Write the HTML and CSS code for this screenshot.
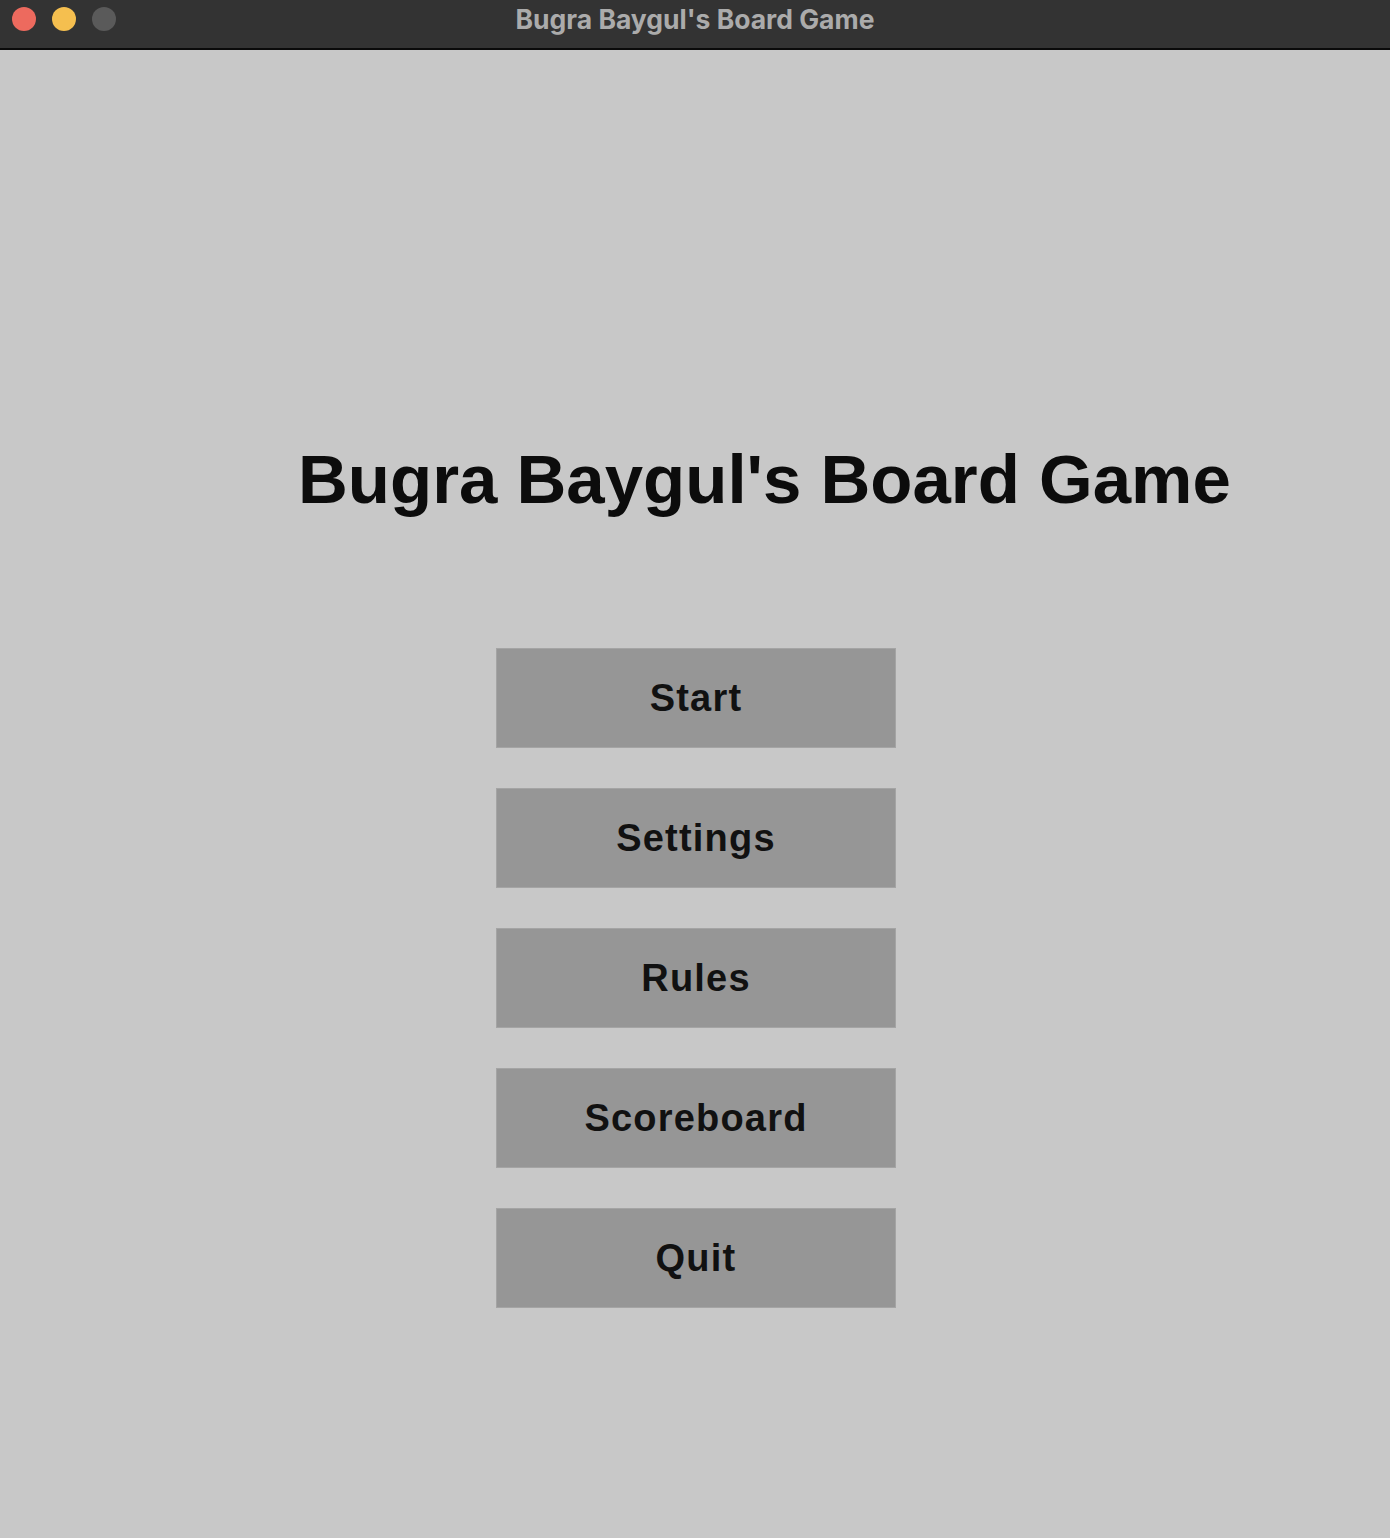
FILE: index.html
```html
<!DOCTYPE html>
<html>
<head>
<meta charset="utf-8">
<link rel="stylesheet" href="styles.css">
</head>
<body>
<div class="window">
  <div class="titlebar">
    <div class="lights">
      <span class="light red"></span>
      <span class="light yellow"></span>
      <span class="light gray"></span>
    </div>
    <div class="wintitle">Bugra Baygul's Board Game</div>
  </div>
  <div class="content">
    <h1 class="heading">Bugra Baygul's Board Game</h1>
    <div class="menu">
      <div class="btn">Start</div>
      <div class="btn">Settings</div>
      <div class="btn">Rules</div>
      <div class="btn">Scoreboard</div>
      <div class="btn">Quit</div>
    </div>
  </div>
</div>
</body>
</html>
```
FILE: styles.css
```css
html, body {
  margin: 0;
  padding: 0;
  background: #c8c8c8;
}
.window {
  width: 1390px;
  height: 1538px;
  display: flex;
  flex-direction: column;
  background: #c8c8c8;
}
.titlebar {
  height: 48px;
  background: #333333;
  border-bottom: 2px solid #0a0a0a;
  position: relative;
  display: flex;
  align-items: center;
  justify-content: center;
  flex-shrink: 0;
}
.lights {
  position: absolute;
  left: 12px;
  top: 7px;
  display: flex;
  gap: 16px;
}
.light {
  width: 24px;
  height: 24px;
  border-radius: 50%;
  display: block;
}
.red { background: #ed6a5e; }
.yellow { background: #f5bf4f; }
.gray { background: #5a5a5a; }
.wintitle {
  font-family: "Inter", "Liberation Sans", sans-serif;
  font-weight: 700;
  font-size: 26.5px;
  color: #ababab;
  margin-top: -10px;
}
.content {
  flex: 1;
  display: flex;
  flex-direction: column;
}
.heading {
  margin: 390px 0 0 298px;
  font-family: "Liberation Sans", Arial, sans-serif;
  font-weight: 700;
  font-size: 69px;
  line-height: 80px;
  color: #0c0c0c;
}
.menu {
  margin-top: 128px;
  display: flex;
  flex-direction: column;
  align-items: flex-start;
  padding-left: 496px;
  gap: 40px;
}
.btn {
  box-sizing: border-box;
  width: 400px;
  height: 100px;
  background: #969696;
  border: 1px solid #a4a4a4;
  display: flex;
  align-items: center;
  justify-content: center;
  font-family: "Liberation Sans", Arial, sans-serif;
  font-weight: 700;
  font-size: 38px;
  letter-spacing: 1.2px;
  color: #111111;
}
```
